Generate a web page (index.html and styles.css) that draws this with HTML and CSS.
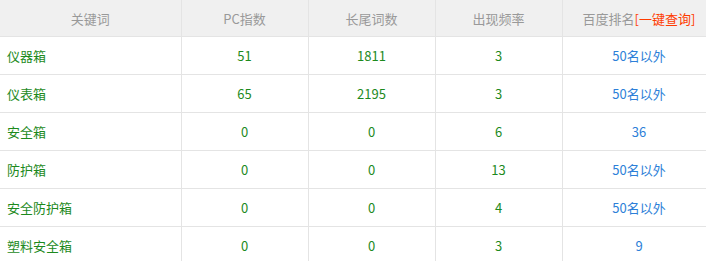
FILE: index.html
```html
<!DOCTYPE html>
<html>
<head>
<meta charset="utf-8">
<link rel="stylesheet" href="styles.css">
</head>
<body>
<table class="kw-table">
  <colgroup>
    <col class="c1"><col class="c2"><col class="c3"><col class="c4"><col class="c5">
  </colgroup>
  <thead>
    <tr>
      <th>关键词</th>
      <th>PC指数</th>
      <th>长尾词数</th>
      <th>出现频率</th>
      <th>百度排名<span class="query">[一键查询]</span></th>
    </tr>
  </thead>
  <tbody>
    <tr><td class="kw">仪器箱</td><td class="num">51</td><td class="num">1811</td><td class="num">3</td><td class="rank">50名以外</td></tr>
    <tr><td class="kw">仪表箱</td><td class="num">65</td><td class="num">2195</td><td class="num">3</td><td class="rank">50名以外</td></tr>
    <tr><td class="kw">安全箱</td><td class="num">0</td><td class="num">0</td><td class="num">6</td><td class="rank">36</td></tr>
    <tr><td class="kw">防护箱</td><td class="num">0</td><td class="num">0</td><td class="num">13</td><td class="rank">50名以外</td></tr>
    <tr><td class="kw">安全防护箱</td><td class="num">0</td><td class="num">0</td><td class="num">4</td><td class="rank">50名以外</td></tr>
    <tr><td class="kw">塑料安全箱</td><td class="num">0</td><td class="num">0</td><td class="num">3</td><td class="rank">9</td></tr>
  </tbody>
</table>
</body>
</html>
```
FILE: styles.css
```css
html, body {
  margin: 0;
  padding: 0;
  background: #fff;
  overflow: hidden;
}
body {
  font-family: "Noto Sans CJK SC", "Microsoft YaHei", sans-serif;
  font-size: 13px;
}
.kw-table {
  border-collapse: collapse;
  table-layout: fixed;
  width: 716px;
}
.c1 { width: 181px; }
.c2 { width: 127px; }
.c3 { width: 127px; }
.c4 { width: 127px; }
.c5 { width: 154px; }
.kw-table th {
  height: 36px;
  padding: 0;
  background: #f0f0f0;
  color: #999;
  font-weight: normal;
  text-align: center;
  border-right: 1px solid #e4e4e4;
  border-bottom: 1px solid #e4e4e4;
}
.kw-table td {
  height: 37px;
  padding: 0;
  text-align: center;
  border-right: 1px solid #e4e4e4;
  border-bottom: 1px solid #e4e4e4;
}
.kw-table td.kw {
  text-align: left;
  padding-left: 7px;
  color: #1d8a1d;
}
.kw-table td.num {
  color: #1d8a1d;
}
.kw-table td.rank {
  color: #2d7fd8;
}
.query {
  color: #ff3c00;
}
```
